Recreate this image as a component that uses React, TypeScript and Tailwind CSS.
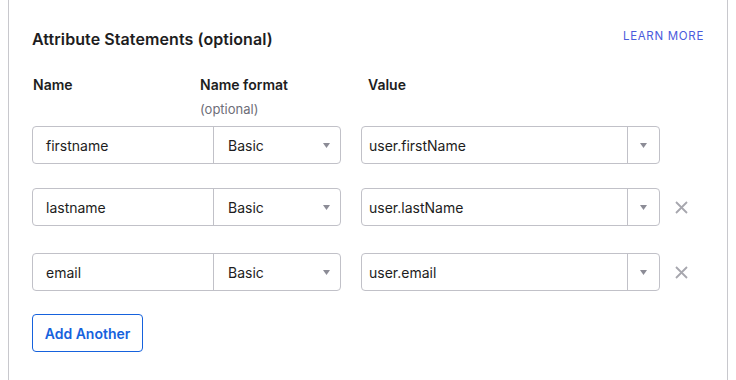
import React from "react";

const Caret = () => (
  <svg width="7" height="5" viewBox="0 0 7 5" className="shrink-0">
    <path d="M0 0 L7 0 L3.5 5 Z" fill="#8c8c96" />
  </svg>
);

const XIcon = () => (
  <svg width="13" height="13" viewBox="0 0 13 13">
    <path d="M1 1 L12 12 M12 1 L1 12" stroke="#a7a7ae" strokeWidth="1.8" strokeLinecap="butt" />
  </svg>
);

type Row = { name: string; value: string; removable: boolean; mt: string };

const rows: Row[] = [
  { name: "firstname", value: "user.firstName", removable: false, mt: "mt-[8px]" },
  { name: "lastname", value: "user.lastName", removable: true, mt: "mt-[24px]" },
  { name: "email", value: "user.email", removable: true, mt: "mt-[27px]" },
];

export default function App() {
  return (
    <div
      className="w-[736px] h-[380px] bg-white overflow-hidden text-[#1d1d21]"
      style={{ fontFamily: "Inter, 'Noto Sans', sans-serif" }}
    >
      <div className="ml-2 w-[720px] h-full border-x border-[#c8c8cd] pl-[23px] pr-[23px] pt-[27px]">
        <div className="flex justify-between items-start h-6">
          <h2 className="text-[16px] leading-6 font-semibold tracking-[0.005em]">Attribute Statements (optional)</h2>
          <a className="pt-[1px] text-[11.5px] leading-4 tracking-[0.06em] text-[#4a5bdc]">LEARN MORE</a>
        </div>

        <div className="mt-[24px] flex">
          <div className="w-[168px] text-[14px] leading-5 font-semibold pl-[1px]">Name</div>
          <div className="w-[168px]">
            <div className="text-[14px] leading-5 font-semibold">Name format</div>
            <div className="mt-[5px] text-[13px] leading-[18px] text-[#6e6e78]">(optional)</div>
          </div>
          <div className="text-[14px] leading-5 font-semibold">Value</div>
        </div>

        {rows.map((r) => (
          <div key={r.name} className={`${r.mt} flex items-center h-[38px]`}>
            <div className="flex w-[309px] h-[38px] border border-[#c1c1c8] rounded-[4px]">
              <div className="w-[181px] border-r border-[#c1c1c8] pl-[13px] flex items-center text-[14px]">
                {r.name}
              </div>
              <div className="flex-1 flex items-center justify-between pl-[14px] pr-[10px] text-[14px]">
                <span>Basic</span>
                <Caret />
              </div>
            </div>
            <div className="ml-[20px] flex w-[299px] h-[38px] border border-[#c1c1c8] rounded-[4px]">
              <div className="flex-1 border-r border-[#c1c1c8] pl-[7px] flex items-center text-[14px]">
                {r.value}
              </div>
              <div className="w-[31px] flex items-center justify-center">
                <Caret />
              </div>
            </div>
            {r.removable && (
              <div className="ml-[15px] flex items-center">
                <XIcon />
              </div>
            )}
          </div>
        ))}

        <button className="mt-[23px] w-[111px] h-[38px] border border-[#1662dd] rounded-[4px] text-[#1662dd] text-[14px] font-semibold">
          Add Another
        </button>
      </div>
    </div>
  );
}
